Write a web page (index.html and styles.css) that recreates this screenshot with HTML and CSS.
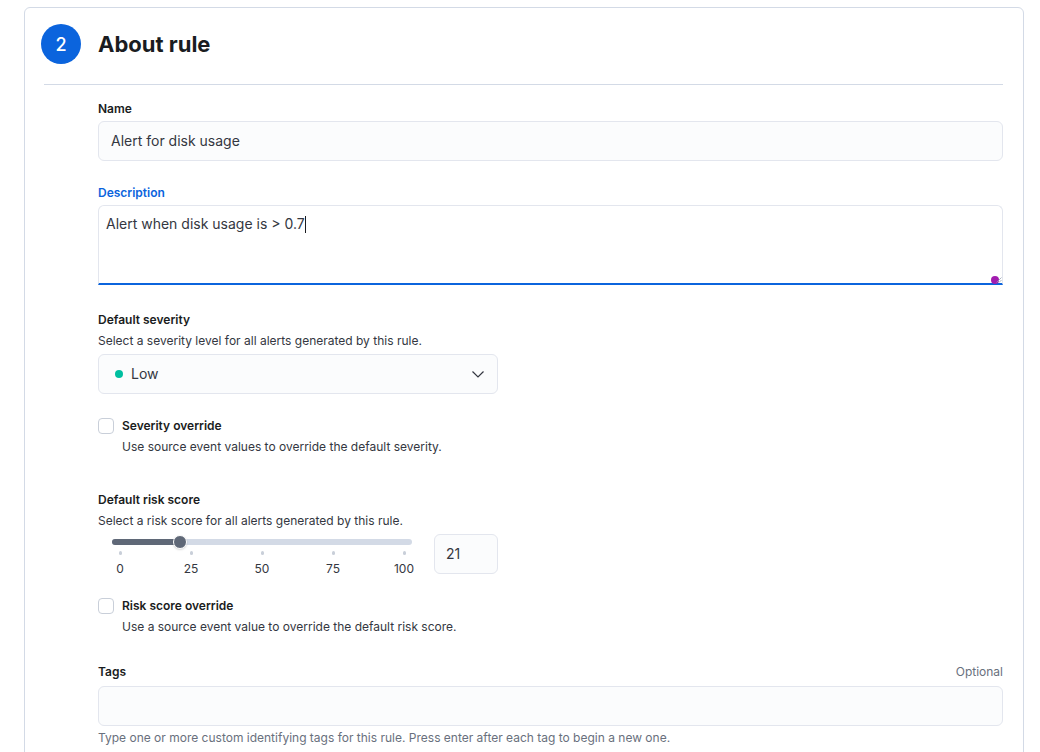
FILE: index.html
```html
<!DOCTYPE html>
<html>
<head>
<meta charset="utf-8">
<link rel="stylesheet" href="styles.css">
</head>
<body>
<div class="panel">
  <div class="header">
    <div class="step">2</div>
    <h2 class="title">About rule</h2>
  </div>
  <div class="divider"></div>
  <div class="form">
    <div class="row row-name">
      <label class="label">Name</label>
      <div class="input">Alert for disk usage</div>
    </div>

    <div class="row row-desc">
      <label class="label label-focus">Description</label>
      <div class="textarea">
        <span>Alert when disk usage is &gt; 0.7</span><span class="caret"></span>
        <span class="resize-dot"></span>
        <svg class="resize-grip" width="6" height="6" viewBox="0 0 6 6"><path d="M0.5 5.5L5.5 0.5M3 5.5L5.5 3" stroke="#98a2b3" stroke-width="0.8"/></svg>
      </div>
    </div>

    <div class="row row-sev">
      <label class="label">Default severity</label>
      <div class="help">Select a severity level for all alerts generated by this rule.</div>
      <div class="select">
        <span class="dot"></span>
        <span class="select-text">Low</span>
        <svg class="chevron" width="14" height="14" viewBox="0 0 14 14"><path d="M1.5 4.5L7 10L12.5 4.5" fill="none" stroke="#343741" stroke-width="1.2"/></svg>
      </div>
    </div>

    <div class="check">
      <span class="box"></span>
      <div class="check-body">
        <div class="check-label">Severity override</div>
        <div class="help">Use source event values to override the default severity.</div>
      </div>
    </div>

    <div class="row row-risk">
      <label class="label">Default risk score</label>
      <div class="help">Select a risk score for all alerts generated by this rule.</div>
      <div class="slider-row">
        <div class="slider">
          <div class="track">
            <div class="fill" style="width: 68px"></div>
            <div class="thumb" style="left: 68px"></div>
          </div>
          <div class="ticks">
            <div class="tick"><span class="tick-mark"></span><span class="tick-label">0</span></div>
            <div class="tick"><span class="tick-mark"></span><span class="tick-label">25</span></div>
            <div class="tick"><span class="tick-mark"></span><span class="tick-label">50</span></div>
            <div class="tick"><span class="tick-mark"></span><span class="tick-label">75</span></div>
            <div class="tick"><span class="tick-mark"></span><span class="tick-label">100</span></div>
          </div>
        </div>
        <div class="number">21</div>
      </div>
    </div>

    <div class="check check-risk">
      <span class="box"></span>
      <div class="check-body">
        <div class="check-label">Risk score override</div>
        <div class="help">Use a source event value to override the default risk score.</div>
      </div>
    </div>

    <div class="row row-tags">
      <div class="label-line">
        <label class="label">Tags</label>
        <span class="optional">Optional</span>
      </div>
      <div class="input"></div>
      <div class="help help-muted">Type one or more custom identifying tags for this rule. Press enter after each tag to begin a new one.</div>
    </div>
  </div>
</div>
</body>
</html>
```

FILE: styles.css
```css
* { box-sizing: border-box; }
html, body { margin: 0; padding: 0; background: #fff; }
body {
  font-family: Inter, "Noto Sans", sans-serif;
  color: #1a1c21;
  height: 752px;
  overflow: hidden;
}
.panel {
  margin: 7px 0 0 24px;
  width: 1000px;
  height: 800px;
  border: 1px solid #d3dae6;
  border-radius: 6px;
}
.header {
  display: flex;
  align-items: center;
  padding: 16px 16px 0 16px;
  height: 56px;
}
.step {
  width: 40px;
  height: 40px;
  border-radius: 50%;
  background: #0b64dd;
  color: #fff;
  font-size: 18px;
  font-weight: 500;
  display: flex;
  align-items: center;
  justify-content: center;
}
.title {
  margin: 0 0 0 17px;
  font-size: 22px;
  font-weight: 700;
  line-height: 28px;
  color: #1a1c21;
}
.divider {
  height: 1px;
  background: #d3dae6;
  margin: 20px 20px 0 19px;
}
.form {
  margin: 0 20px 0 73px;
  padding-top: 15px;
}
.label {
  display: block;
  font-size: 12px;
  line-height: 16px;
  padding-top: 1px;
  font-weight: 600;
  color: #1a1c21;
}
.label-focus { color: #0b64dd; }
.help {
  font-size: 12px;
  line-height: 16px;
  color: #343741;
}
.help-muted { color: #69707d; margin-top: 4px; }
.input {
  margin-top: 4px;
  height: 40px;
  background: #fbfcfd;
  border: 1px solid #e3e6ee;
  border-radius: 6px;
  font-size: 14px;
  line-height: 38px;
  padding: 0 12px;
  color: #343741;
}
.row-desc { margin-top: 23px; }
.textarea {
  position: relative;
  margin-top: 4px;
  height: 80px;
  background: #fff;
  border: 1px solid #e3e6ee;
  border-bottom: 2px solid #0b64dd;
  border-radius: 6px 6px 0 0;
  font-size: 14px;
  line-height: 20px;
  padding: 8px 7px;
  color: #343741;
}
.caret {
  display: inline-block;
  width: 1px;
  height: 17px;
  background: #1a1c21;
  vertical-align: -4px;
}
.resize-dot {
  position: absolute;
  right: 3px;
  bottom: -1px;
  width: 8px;
  height: 8px;
  border-radius: 50%;
  background: #a21caf;
}
.resize-grip {
  position: absolute;
  right: 0;
  bottom: 0;
}
.row-sev { margin-top: 26px; }
.row-sev .help { margin-top: 5px; }
.select {
  margin-top: 5px;
  width: 400px;
  height: 40px;
  background: #fbfcfd;
  border: 1px solid #e3e6ee;
  border-radius: 6px;
  display: flex;
  align-items: center;
  padding: 0 12px 1px 16px;
  font-size: 14px;
  line-height: 18px;
  color: #343741;
}
.dot {
  width: 8px;
  height: 8px;
  border-radius: 50%;
  background: #00bfa0;
  margin-right: 8px;
}
.select-text { flex: 1; }
.check {
  display: flex;
  margin-top: 24px;
}
.box {
  width: 16px;
  height: 16px;
  border: 1px solid #c9cfd9;
  border-radius: 4px;
  background: #fff;
  flex: none;
}
.check-body { margin-left: 8px; }
.check-label {
  font-size: 12px;
  line-height: 16px;
  font-weight: 600;
  color: #1a1c21;
}
.check-body .help { margin-top: 5px; }
.row-risk { margin-top: 36px; }
.row-risk .help { margin-top: 5px; }
.slider-row {
  display: flex;
  align-items: flex-start;
  margin-top: 5px;
}
.slider {
  width: 314px;
  padding-left: 14px;
  margin-right: 22px;
}
.track {
  position: relative;
  margin-top: 5px;
  height: 6px;
  border-radius: 3px;
  background: #d3dae6;
}
.fill {
  position: absolute;
  left: 0;
  top: 0;
  height: 6px;
  border-radius: 3px;
  background: #5f6877;
}
.thumb {
  position: absolute;
  top: -4px;
  width: 14px;
  height: 14px;
  margin-left: -7px;
  border-radius: 50%;
  background: #5f6877;
  border: 1.5px solid #fff;
  box-shadow: 0 1px 2px rgba(0, 0, 0, 0.15);
}
.ticks {
  display: flex;
  justify-content: space-between;
  margin: 6px 8px 0 8px;
}
.tick {
  width: 0;
  display: flex;
  flex-direction: column;
  align-items: center;
}
.tick-mark {
  flex: none;
  width: 3px;
  height: 4px;
  border-radius: 2px;
  background: #c9cfd9;
}
.tick-label {
  margin-top: 6px;
  font-size: 12px;
  line-height: 16px;
  color: #343741;
}
.number {
  width: 64px;
  height: 40px;
  background: #fbfcfd;
  border: 1px solid #e3e6ee;
  border-radius: 6px;
  font-size: 14px;
  line-height: 38px;
  padding: 0 11px;
  color: #343741;
}
.check-risk { margin-top: 21px; }
.row-tags { margin-top: 28px; }
.label-line {
  display: flex;
  justify-content: space-between;
  align-items: flex-end;
}
.optional {
  font-size: 12px;
  line-height: 16px;
  color: #69707d;
}
.row-tags .input { margin-top: 6px; }
```
